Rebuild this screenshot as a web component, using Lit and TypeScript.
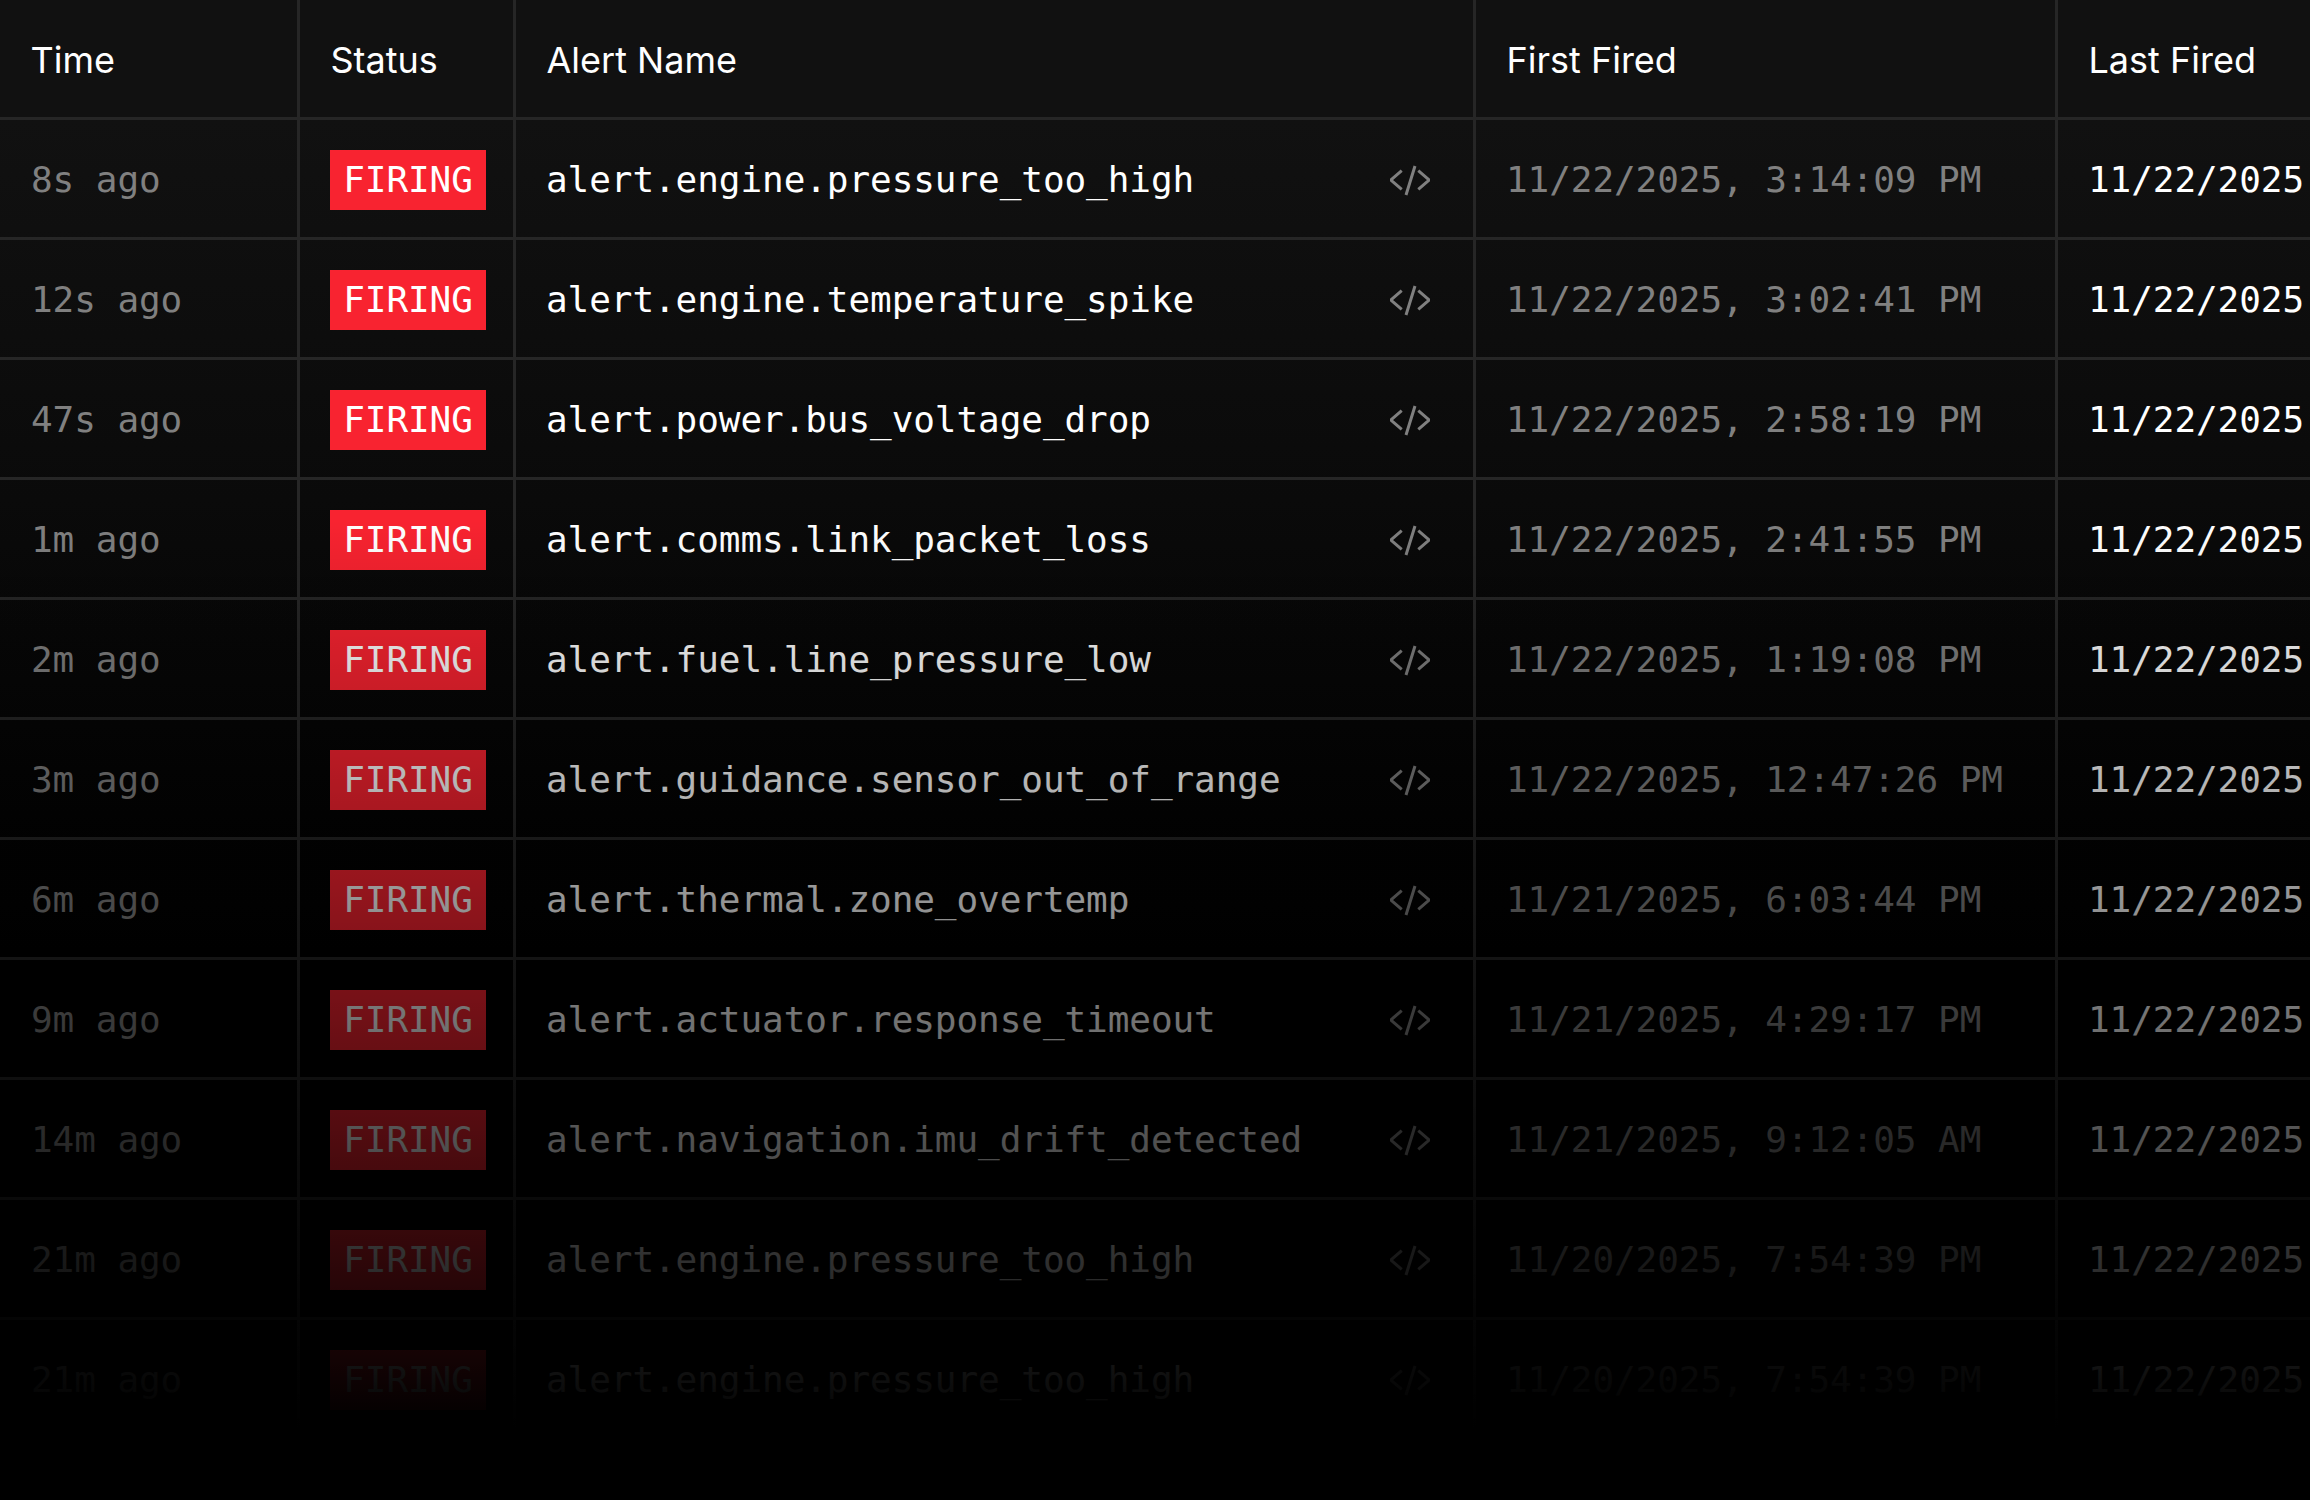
import { LitElement, html, css, svg } from "lit";
import { customElement } from "lit/decorators.js";

const rows = [
  ["8s ago", "alert.engine.pressure_too_high", "11/22/2025, 3:14:09 PM"],
  ["12s ago", "alert.engine.temperature_spike", "11/22/2025, 3:02:41 PM"],
  ["47s ago", "alert.power.bus_voltage_drop", "11/22/2025, 2:58:19 PM"],
  ["1m ago", "alert.comms.link_packet_loss", "11/22/2025, 2:41:55 PM"],
  ["2m ago", "alert.fuel.line_pressure_low", "11/22/2025, 1:19:08 PM"],
  ["3m ago", "alert.guidance.sensor_out_of_range", "11/22/2025, 12:47:26 PM"],
  ["6m ago", "alert.thermal.zone_overtemp", "11/21/2025, 6:03:44 PM"],
  ["9m ago", "alert.actuator.response_timeout", "11/21/2025, 4:29:17 PM"],
  ["14m ago", "alert.navigation.imu_drift_detected", "11/21/2025, 9:12:05 AM"],
  ["21m ago", "alert.engine.pressure_too_high", "11/20/2025, 7:54:39 PM"],
  ["21m ago", "alert.engine.pressure_too_high", "11/20/2025, 7:54:39 PM"],
];

const codeIcon = svg`<path d="M11.7 12.7 0.7 22 11.7 31.3M25 8 16 37M28.3 12.7 39.3 22 28.3 31.3" fill="none" stroke="currentColor" stroke-width="3"/>`;

@customElement("app-root")
export class AppRoot extends LitElement {
  static styles = css`
    :host { display: block; position: relative; width: 2310px; height: 1500px; overflow: hidden; color: #fff;
      background: linear-gradient(to bottom, #111 120px, #0a0a0a 500px, #000 950px); }
    .row { display: grid; grid-template-columns: 300px 216px 960px 582px 1fr; height: 120px; border-bottom: 3px solid #262626; box-sizing: border-box; }
    .cell { display: flex; align-items: center; padding: 3px 0 0 30px; border-right: 3px solid #262626; box-sizing: border-box; white-space: nowrap; overflow: hidden; font: 400 36px/1 "DejaVu Sans Mono", monospace; letter-spacing: -0.07px; }
    .cell:last-child { border-right: none; }
    .head { background: #111; }
    .head .cell { font: 400 36px/1 Inter, sans-serif; letter-spacing: 0; color: #fff; padding: 2px 0 0 30.5px; }
    .time { padding-left: 31px; }
    .muted { color: #808080; }
    .badge { box-sizing: border-box; display: flex; align-items: center; justify-content: center; width: 156px; height: 60px; background: #f82330; color: #fff; }
    .name { justify-content: space-between; padding-right: 43px; }
    svg { width: 40px; height: 44px; color: #808080; flex: none; }
    .fade { position: absolute; inset: 0; pointer-events: none; background: linear-gradient(to bottom, rgba(0,0,0,0) 520px, #000 1430px); }
  `;

  render() {
    return html`
      <div class="row head">
        <div class="cell">Time</div><div class="cell">Status</div><div class="cell">Alert Name</div><div class="cell">First Fired</div><div class="cell">Last Fired</div>
      </div>
      ${rows.map((r) => html`
        <div class="row">
          <div class="cell muted time">${r[0]}</div>
          <div class="cell"><span class="badge">FIRING</span></div>
          <div class="cell name"><span>${r[1]}</span><svg viewBox="0 0 40 44">${codeIcon}</svg></div>
          <div class="cell muted">${r[2]}</div>
          <div class="cell">11/22/2025</div>
        </div>`)}
      <div class="fade"></div>
    `;
  }
}
